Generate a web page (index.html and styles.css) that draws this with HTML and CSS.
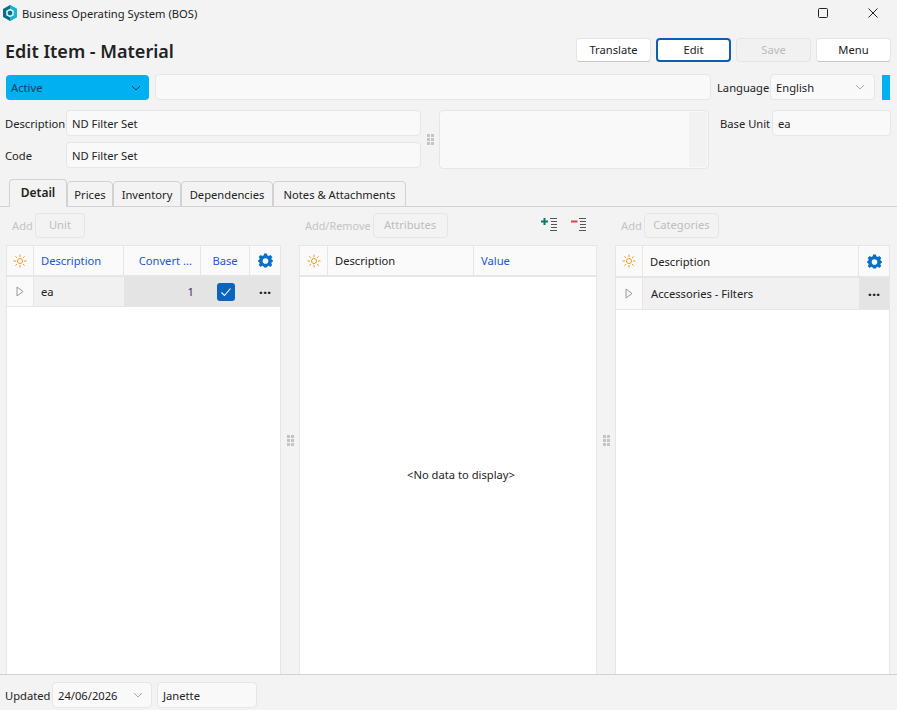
FILE: index.html
```html
<!DOCTYPE html>
<html lang="en">
<head>
<meta charset="UTF-8">
<title>Business Operating System (BOS)</title>
<link rel="stylesheet" href="styles.css">
</head>
<body>

<!-- title bar -->
<div class="titlebar">
    <svg class="logo" width="16" height="16" viewBox="0 0 16 16">
        <path d="M8 0L15 4V12L8 16L1 12V4Z" fill="#0d6f86"/>
        <path d="M8 0L15 4V12L8 16V12L11.5 10V6L8 4Z" fill="#19b3d3"/>
        <path d="M8 4.5L11 6.2V9.8L8 11.5L5 9.8V6.2Z" fill="none" stroke="#eafafd" stroke-width="1.5"/>
    </svg>
    <span class="app-name">Business Operating System (BOS)</span>
    <div class="window-buttons">
        <svg width="10" height="10" viewBox="0 0 10 10"><rect x="0.5" y="0.5" width="9" height="9" rx="1" fill="none" stroke="#222"/></svg>
        <svg width="10" height="10" viewBox="0 0 10 10"><path d="M0.5 0.5L9.5 9.5M9.5 0.5L0.5 9.5" stroke="#222" fill="none"/></svg>
    </div>
</div>

<!-- heading + actions -->
<div class="heading">
    <h1>Edit Item - Material</h1>
    <div class="actions">
        <button class="btn">Translate</button>
        <button class="btn focused">Edit</button>
        <button class="btn disabled">Save</button>
        <button class="btn">Menu</button>
    </div>
</div>

<!-- status row -->
<div class="status-row">
    <div class="status-select">
        <span>Active</span>
        <svg class="chev" width="10" height="6" viewBox="0 0 10 6"><path d="M1 1L5 5L9 1" fill="none" stroke="#14405a" stroke-width="1"/></svg>
    </div>
    <div class="field grow"></div>
    <label class="lang-label">Language</label>
    <div class="field lang-select">
        <span>English</span>
        <svg class="chev" width="10" height="6" viewBox="0 0 10 6"><path d="M1 1L5 5L9 1" fill="none" stroke="#aaa" stroke-width="1"/></svg>
    </div>
    <div class="status-chip"></div>
</div>

<!-- description / code -->
<div class="fields-row">
    <div class="fields-left">
        <div class="field-line">
            <label>Description</label>
            <div class="field grow">ND Filter Set</div>
        </div>
        <div class="field-line">
            <label>Code</label>
            <div class="field grow">ND Filter Set</div>
        </div>
    </div>
    <div class="grip top-grip"><i></i><i></i><i></i><i></i><i></i><i></i></div>
    <div class="notes-box"><div class="notes-scroll"></div></div>
    <div class="base-unit">
        <label>Base Unit</label>
        <div class="field grow">ea</div>
    </div>
</div>

<!-- tabs -->
<div class="tabs">
    <div class="tab active">Detail</div>
    <div class="tab prices">Prices</div>
    <div class="tab inventory">Inventory</div>
    <div class="tab dependencies">Dependencies</div>
    <div class="tab notes">Notes &amp; Attachments</div>
</div>

<div class="tab-body">

    <!-- units -->
    <div class="col side">
        <div class="toolbar">
            <span class="faded">Add</span>
            <button class="btn-small unit">Unit</button>
        </div>
        <div class="grid">
            <div class="row head units-cols">
                <div class="cell center"><svg class="sun" width="14" height="14" viewBox="0 0 14 14"><use href="#sun"/></svg></div>
                <div class="cell blue">Description</div>
                <div class="cell blue clip">Convert ...</div>
                <div class="cell blue center">Base</div>
                <div class="cell center"><svg width="15" height="15" viewBox="0 0 16 16"><use href="#gear"/></svg></div>
            </div>
            <div class="row data units-cols">
                <div class="cell center plain"><svg width="8" height="11" viewBox="0 0 8 11"><use href="#arrow"/></svg></div>
                <div class="cell light">ea</div>
                <div class="cell dark num">1</div>
                <div class="cell dark center"><span class="check"><svg width="12" height="10" viewBox="0 0 12 10"><path d="M1.5 5.5L4.5 8.5L10.5 1.5" fill="none" stroke="#fff" stroke-width="1.1"/></svg></span></div>
                <div class="cell dark center dots">···</div>
            </div>
        </div>
    </div>

    <div class="grip"><i></i><i></i><i></i><i></i><i></i><i></i></div>

    <!-- attributes -->
    <div class="col middle">
        <div class="toolbar">
            <span class="faded add-remove">Add/Remove</span>
            <button class="btn-small">Attributes</button>
            <div class="indent-icons">
                <svg width="16" height="16" viewBox="0 0 16 16">
                    <path d="M3.5 0V7M0 3.5H7" stroke="#0d7a66" stroke-width="2" fill="none"/>
                    <path d="M9 0.5H16M10 3.5H16M10 6.5H16M10 9.5H16M9 12.5H16" stroke="#555" fill="none"/>
                </svg>
                <svg width="16" height="16" viewBox="0 0 16 16">
                    <path d="M0 3.5H6.5" stroke="#e0404f" stroke-width="2" fill="none"/>
                    <path d="M8 0.5H15M9 3.5H15M9 6.5H15M9 9.5H15M8 12.5H15" stroke="#555" fill="none"/>
                </svg>
            </div>
        </div>
        <div class="grid">
            <div class="row head attr-cols">
                <div class="cell center"><svg width="14" height="14" viewBox="0 0 14 14"><use href="#sun"/></svg></div>
                <div class="cell">Description</div>
                <div class="cell blue">Value</div>
            </div>
            <div class="no-data">&lt;No data to display&gt;</div>
        </div>
    </div>

    <div class="grip"><i></i><i></i><i></i><i></i><i></i><i></i></div>

    <!-- categories -->
    <div class="col side">
        <div class="toolbar">
            <span class="faded">Add</span>
            <button class="btn-small">Categories</button>
        </div>
        <div class="grid">
            <div class="row head cat-cols">
                <div class="cell center"><svg width="14" height="14" viewBox="0 0 14 14"><use href="#sun"/></svg></div>
                <div class="cell">Description</div>
                <div class="cell center"><svg width="15" height="15" viewBox="0 0 16 16"><use href="#gear"/></svg></div>
            </div>
            <div class="row data tall cat-cols">
                <div class="cell center plain"><svg width="8" height="11" viewBox="0 0 8 11"><use href="#arrow"/></svg></div>
                <div class="cell light wide">Accessories - Filters</div>
                <div class="cell dark center dots">···</div>
            </div>
        </div>
    </div>
</div>

<!-- footer -->
<div class="footer">
    <label>Updated</label>
    <div class="field date-field">
        <span>24/06/2026</span>
        <svg class="chev" width="10" height="6" viewBox="0 0 10 6"><path d="M1 1L5 5L9 1" fill="none" stroke="#aaa" stroke-width="1"/></svg>
    </div>
    <div class="field user-field">Janette</div>
</div>

<!-- shared icons -->
<svg class="icon-defs" width="0" height="0">
    <defs>
        <g id="sun" fill="none" stroke="#f39a1f">
            <circle cx="7" cy="7" r="2.5"/>
            <path d="M7 0.5V3M7 11V13.5M0.5 7H3M11 7H13.5M2.4 2.4L4 4M10 10L11.6 11.6M11.6 2.4L10 4M4 10L2.4 11.6"/>
        </g>
        <g id="gear">
            <path fill="#0a6fc9" fill-rule="evenodd" d="M6.5 1H9.5L9.9 3L11.5 3.7L13.2 2.6L15.3 4.7L14.2 6.4L14.9 8L15.9 8.3V9.7L14.9 10L14.2 11.6L15.2 13.3L13.2 15.3L11.5 14.2L9.9 14.9L9.5 15.9H6.5L6.1 14.9L4.5 14.2L2.8 15.3L0.8 13.3L1.8 11.6L1.1 10L0.1 9.7V8.3L1.1 8L1.8 6.4L0.7 4.7L2.8 2.6L4.5 3.7L6.1 3ZM8 6A3 3 0 1 0 8 12A3 3 0 1 0 8 6Z" transform="translate(0 -0.5)"/>
        </g>
        <path id="arrow" d="M1 1L7 5.5L1 10Z" fill="none" stroke="#999"/>
    </defs>
</svg>

</body>
</html>
```

FILE: styles.css
```css
* {
box-sizing: border-box;
}

html, body {
height: 100%;
}

body {
margin: 0;
height: 710px;
overflow: hidden;
display: flex;
flex-direction: column;
background: #f3f3f3;
color: #222;
font-family: "Noto Sans", "Liberation Sans", sans-serif;
font-size: 11.2px;
}

label {
color: #222;
}

/* title bar */
.titlebar {
height: 31px;
flex: none;
display: flex;
align-items: center;
padding: 0 19px 5px 2px;
}

.logo {
margin-right: 4px;
}

.window-buttons {
margin-left: auto;
display: flex;
align-items: center;
gap: 40px;
}

/* heading */
.heading {
height: 38px;
flex: none;
display: flex;
align-items: center;
justify-content: space-between;
padding: 0 6px 0 5px;
}

h1 {
margin: 0;
padding-top: 2px;
font-size: 18px;
font-weight: 600;
}

.actions {
display: flex;
gap: 5px;
}

.btn {
width: 75px;
height: 24px;
padding: 0 0 2px;
background: #fff;
border: 1px solid #e4e4e4;
border-bottom-color: #c8c8c8;
border-radius: 4px;
color: #1c1c1c;
font: inherit;
}

.btn.focused {
border: 2px solid #0a5fb4;
}

.btn.disabled {
background: #f1f1f1;
border-color: #e5e5e5;
color: #bbb;
}

/* fields */
.field {
height: 26px;
display: flex;
align-items: center;
padding: 0 5px;
background: #f9f9f9;
border: 1px solid #e6e6e6;
border-radius: 4px;
}

.grow {
flex: 1;
}

.chev {
margin-left: auto;
}

.status-row {
height: 26px;
margin-top: 5px;
flex: none;
display: flex;
align-items: flex-end;
padding: 0 7px 0 6px;
}

.status-select {
width: 143px;
height: 25px;
margin-right: 6px;
display: flex;
align-items: center;
padding: 0 8px 0 5px;
background: #00b0f0;
border-radius: 4px;
color: #14405a;
}

.lang-label {
width: 53px;
height: 25px;
margin-left: 6px;
display: flex;
align-items: center;
}

.lang-select {
width: 105px;
padding-right: 9px;
}

.status-chip {
width: 8px;
height: 25px;
margin-left: 7px;
background: #00b0f0;
}

.fields-row {
height: 59px;
margin-top: 10px;
flex: none;
display: flex;
padding: 0 6px 0 5px;
}

.fields-left {
width: 416px;
display: flex;
flex-direction: column;
gap: 6px;
}

.field-line {
display: flex;
align-items: center;
}

.field-line label {
width: 61px;
}

.notes-box {
width: 270px;
display: flex;
justify-content: flex-end;
padding: 1px;
background: #f9f9f9;
border: 1px solid #e6e6e6;
border-radius: 4px;
}

.notes-scroll {
width: 18px;
background: #f2f2f2;
}

.base-unit {
flex: 1;
height: 26px;
display: flex;
align-items: center;
padding-left: 11px;
}

.base-unit label {
width: 52px;
}

/* grips between panes */
.grip {
width: 18px;
display: grid;
grid-template-columns: 3px 3px;
grid-auto-rows: 3px;
gap: 1px;
justify-content: center;
align-content: center;
}

.grip i {
background: #c4c4c4;
}

.top-grip {
height: 59px;
}

/* tabs */
.tabs {
height: 28px;
margin-top: 9px;
flex: none;
display: flex;
align-items: flex-end;
padding-left: 9px;
}

.tab {
height: 26px;
margin-bottom: -1px;
display: flex;
align-items: center;
justify-content: center;
border: 1px solid #d2d2d2;
border-radius: 4px 4px 0 0;
color: #222;
}

.tab.active {
width: 58px;
height: 28px;
padding-bottom: 2px;
background: #f3f3f3;
border-bottom-color: #f3f3f3;
font-size: 12px;
font-weight: 600;
position: relative;
z-index: 1;
}

.tab.prices {
width: 46px;
}

.tab.inventory {
width: 68px;
}

.tab.dependencies {
width: 92px;
}

.tab.notes {
width: 133px;
}

.tab-body {
flex: 1;
min-height: 0;
display: flex;
padding: 0 7px 0 6px;
border-top: 1px solid #d2d2d2;
border-bottom: 1px solid #d2d2d2;
}

.col {
min-width: 0;
display: flex;
flex-direction: column;
}

.col.side {
width: 275px;
}

.col.middle {
width: 298px;
}

.toolbar {
height: 38px;
flex: none;
display: flex;
align-items: center;
padding: 0 0 1px 6px;
gap: 2px;
}

.faded {
color: #c4c4c4;
}

.add-remove {
font-size: 10.9px;
}

.btn-small {
width: 75px;
height: 25px;
padding: 0 0 2px;
background: #f3f3f3;
border: 1px solid #e5e5e5;
border-radius: 4px;
color: #bdbdbd;
font: inherit;
}

.btn-small.unit {
width: 50px;
}

.indent-icons {
margin-left: auto;
display: flex;
gap: 14px;
padding-right: 10px;
}

.grid {
flex: 1;
min-height: 0;
display: flex;
flex-direction: column;
background: #fff;
border: 1px solid #e6e6e6;
border-bottom: none;
}

.row {
flex: none;
display: grid;
}

.row.head {
height: 31px;
background: #fafafa;
border-bottom: 2px solid #e6e6e6;
}

.row.head.cat-cols {
height: 32px;
}

.row.data {
height: 30px;
border-bottom: 1px solid #e6e6e6;
}

.row.tall {
height: 32px;
}

.units-cols {
grid-template-columns: 27px 90px 77px 49px 1fr;
}

.attr-cols {
grid-template-columns: 28px 146px 1fr;
}

.cat-cols {
grid-template-columns: 27px 216px 1fr;
}

.cell {
min-width: 0;
display: flex;
align-items: center;
padding: 0 7px;
border-right: 1px solid #e6e6e6;
white-space: nowrap;
}

.cell:last-child {
border-right: none;
}

.cell.center {
justify-content: center;
padding: 0;
}

.cell.blue {
color: #1b55d8;
}

.cell.clip {
justify-content: flex-end;
padding-right: 8px;
}

.cell.plain {
background: #fafafa;
}

.cell.light {
background: #f1f1f1;
border-right: none;
}

.cell.wide {
padding-left: 8px;
}

.cell.dark {
background: #e4e4e4;
border-right: none;
}

.cell.num {
justify-content: flex-end;
color: #3b2a5a;
}

.dots {
font-size: 15px;
font-weight: 700;
color: #222;
}

.check {
width: 18px;
height: 18px;
display: flex;
align-items: center;
justify-content: center;
background: #0a63bd;
border-radius: 3px;
}

.no-data {
flex: 1;
display: flex;
align-items: center;
justify-content: center;
padding: 0 0 3px 26px;
}

/* footer */
.footer {
height: 35px;
flex: none;
display: flex;
align-items: flex-end;
padding: 0 5px 2px;
}

.footer label {
width: 47px;
height: 26px;
display: flex;
align-items: center;
}

.date-field {
width: 100px;
padding-right: 8px;
}

.user-field {
width: 100px;
margin-left: 5px;
}

.icon-defs {
position: absolute;
}
```
